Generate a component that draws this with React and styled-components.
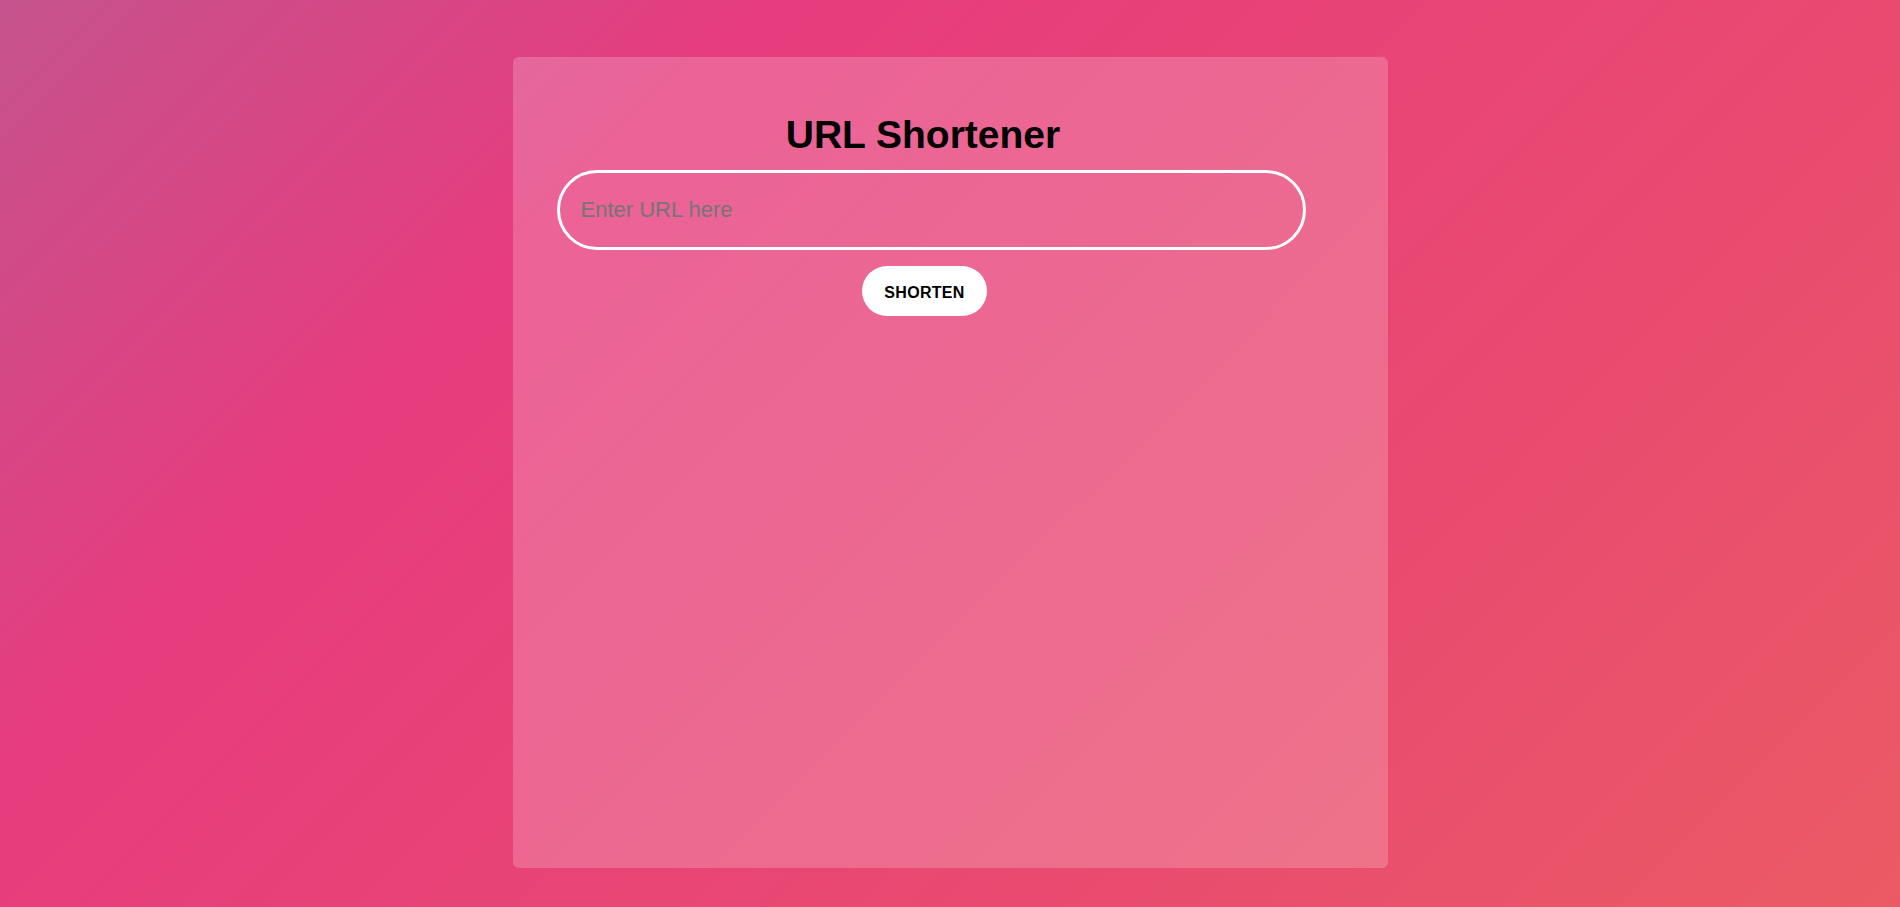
import React from "react";
import styled, { createGlobalStyle } from "styled-components";

const GlobalStyle = createGlobalStyle`
  html, body {
    margin: 0;
    padding: 0;
  }
  body {
    font-family: "Liberation Sans", Arial, sans-serif;
  }
  * { box-sizing: border-box; }
`;

const Page = styled.div`
  min-height: 907px;
  height: 100vh;
  padding-top: 57px;
  background: linear-gradient(
    135deg,
    #c5538d 0%,
    #e73c7e 28%,
    #e94a70 68%,
    #eb5a64 100%
  );
`;

const Card = styled.main`
  width: 875px;
  height: 811px;
  margin: 0 auto;
  padding: 55px 0 0 44px;
  border-radius: 6px;
  background: rgba(255, 255, 255, 0.2);
`;

const Column = styled.div`
  width: 733px;
  display: flex;
  flex-direction: column;
  align-items: center;
`;

const Title = styled.h1`
  margin: 0 0 13px;
  font-size: 39px;
  line-height: 45px;
  font-weight: 700;
  color: #000;
`;

const UrlInput = styled.input`
  align-self: flex-start;
  width: 749px;
  height: 80px;
  padding: 0 21px;
  border: 3px solid #fff;
  border-radius: 40px;
  background: transparent;
  font-family: "Liberation Sans", Arial, sans-serif;
  font-size: 22px;
  color: #222;
  outline: none;
  &::placeholder {
    color: #757575;
  }
`;

const Button = styled.button`
  margin-top: 16px;
  margin-left: 3px;
  height: 50px;
  padding: 4px 22px 0;
  border: none;
  border-radius: 25px;
  background: #fff;
  font-family: "Liberation Sans", Arial, sans-serif;
  font-size: 16px;
  font-weight: 700;
  letter-spacing: 0.3px;
  color: #000;
  cursor: pointer;
`;

export default function App() {
  return (
    <>
      <GlobalStyle />
      <Page>
        <Card>
          <Column>
            <Title>URL Shortener</Title>
            <UrlInput type="text" placeholder="Enter URL here" />
            <Button>SHORTEN</Button>
          </Column>
        </Card>
      </Page>
    </>
  );
}
